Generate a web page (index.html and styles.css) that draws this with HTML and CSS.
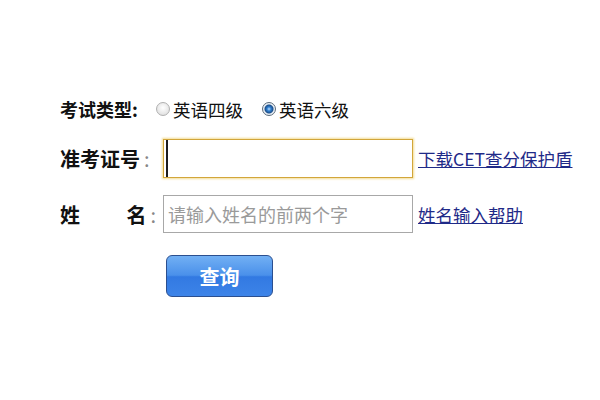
FILE: index.html
```html
<!DOCTYPE html>
<html lang="zh-CN">
<head>
    <meta charset="UTF-8">
    <title>CET成绩查询</title>
    <link rel="stylesheet" href="styles.css">
</head>
<body>
    <form class="query">
        <div class="type-row">
            <span class="type-label">考试类型:</span>
            <label class="radio"><input type="radio" name="type"> 英语四级</label>
            <label class="radio"><input type="radio" name="type" checked> 英语六级</label>
        </div>

        <div class="field-row">
            <label class="field-label">准考证号<span class="colon">:</span></label>
            <input type="text" class="text-input focused">
            <a href="#" class="help-link">下载CET查分保护盾</a>
        </div>

        <div class="field-row second">
            <label class="field-label spread"><span>姓</span><span>名<span class="colon">:</span></span></label>
            <input type="text" class="text-input" placeholder="请输入姓名的前两个字">
            <a href="#" class="help-link">姓名输入帮助</a>
        </div>

        <button type="button" class="submit">查询</button>
    </form>
</body>
</html>
```

FILE: styles.css
```css
body {
    margin: 0;
    background: #fff;
    color: #111;
    font-family: "Noto Sans CJK SC", "Noto Sans", sans-serif;
}
.query {
    padding: 97px 0 0 60px;
}
.type-row {
    display: flex;
    align-items: center;
    height: 24px;
    font-size: 17.5px;
}
.type-label {
    font-size: 18px;
    font-weight: bold;
    width: 96px;
}
.radio {
    display: flex;
    align-items: center;
    margin-right: 19px;
}
.radio input {
    appearance: none;
    width: 14px;
    height: 14px;
    margin: 0 3px 0 0;
    border: 1px solid #b0b0b0;
    border-radius: 50%;
    background: radial-gradient(circle at 50% 40%, #fff 0, #e4e4e4 70%, #cfcfcf 100%);
}
.radio input:checked {
    border-color: #5a6a7a;
    background: radial-gradient(circle at 50% 50%, #bfe0ff 0, #2f7fd0 2px, #1d4f8a 4px, #e8eef4 5px, #f8f8f8 100%);
}
.field-row {
    display: flex;
    align-items: center;
    margin-top: 18px;
}
.field-row.second {
    margin-top: 17px;
}
.field-label {
    width: 103px;
    font-size: 20px;
    font-weight: bold;
}
.field-label.spread {
    display: flex;
    justify-content: space-between;
    width: 96px;
    margin-right: 7px;
}
.colon {
    color: #888;
    font-weight: normal;
    margin-left: 4px;
}
.text-input {
    box-sizing: border-box;
    width: 250px;
    height: 38px;
    padding: 0 4px;
    border: 1px solid #a8a8a8;
    font-family: "Noto Sans CJK SC", sans-serif;
    font-size: 18px;
    outline: none;
}
.text-input::placeholder {
    color: #9a9a9a;
}
.text-input.focused {
    height: 39px;
    border-color: #d2a63a;
    box-shadow: 0 0 2px 1px #f3dc95, inset 2px 0 0 #fff, inset 4px 0 0 #1c1c1c;
}
.help-link {
    margin-left: 5px;
    color: #1f2a88;
    font-size: 17.5px;
}
.submit {
    display: block;
    width: 107px;
    height: 42px;
    margin: 22px 0 0 106px;
    border: 1px solid #2b4f8f;
    border-radius: 6px;
    background: linear-gradient(#72b0f4, #4a90ea 48%, #3279e2 52%, #3d84e8);
    color: #fff;
    font-family: "Noto Sans CJK SC", sans-serif;
    font-size: 20px;
    font-weight: bold;
    cursor: pointer;
}
```
